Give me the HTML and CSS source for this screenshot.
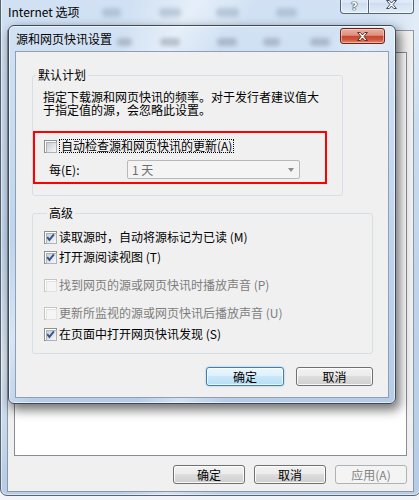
FILE: index.html
```html
<!DOCTYPE html>
<html lang="zh-CN">
<head>
<meta charset="utf-8">
<title>源和网页快讯设置</title>
<link rel="stylesheet" href="styles.css">
</head>
<body>
<div class="bgwin glass">
  <div class="bg-title">
    <span class="win-title">Internet 选项</span>
    <i class="haze" style="left:95px;top:15px;width:19px"></i>
    <i class="haze" style="left:152px;top:15px;width:22px"></i>
    <i class="haze" style="left:209px;top:15px;width:23px"></i>
    <i class="haze" style="left:269px;top:15px;width:21px"></i>
  </div>
  <div class="caps">
    <div class="cap cap-help"><span>?</span></div>
    <div class="cap cap-close">
      <svg width="11" height="9" viewBox="0 0 12 10"><path d="M0.5 0.5H3.5L6 3.3L8.5 0.5H11.5L7.7 5L11.5 9.5H8.5L6 6.7L3.5 9.5H0.5L4.3 5Z" fill="#fff" stroke="#2e3b4c" stroke-width="1"/></svg>
    </div>
  </div>
  <div class="bg-client">
    <div class="bg-tabs"></div>
    <div class="bg-panel"></div>
    <div class="bg-buttons">
      <button class="btn bg-btn" type="button">确定</button>
      <button class="btn bg-btn" type="button">取消</button>
      <button class="btn bg-btn" type="button" disabled>应用(A)</button>
    </div>
  </div>
</div>

<div class="dlg glass">
  <div class="dlg-title">
    <span class="win-title">源和网页快讯设置</span>
    <i class="haze dark" style="left:102px;top:12px;width:15px"></i>
    <i class="haze dark" style="left:145px;top:12px;width:20px"></i>
    <i class="haze dark" style="left:202px;top:12px;width:20px"></i>
    <i class="haze dark" style="left:248px;top:12px;width:17px"></i>
    <i class="haze dark" style="left:295px;top:12px;width:20px"></i>
    <div class="dlg-close">
      <svg width="11" height="9" viewBox="0 0 12 10"><path d="M0.5 0.5H3.5L6 3.3L8.5 0.5H11.5L7.7 5L11.5 9.5H8.5L6 6.7L3.5 9.5H0.5L4.3 5Z" fill="#fff" stroke="#5a1a10" stroke-width="1"/></svg>
    </div>
  </div>
  <div class="dlg-client">
    <fieldset class="group g1">
      <legend>默认计划</legend>
      <p class="desc">指定下载源和网页快讯的频率。对于发行者建议值大<br>于指定值的源，会忽略此设置。</p>
      <div class="hilite">
        <div class="row row-tight"><span class="cb"></span><span class="focus">自动检查源和网页快讯的更新(A)</span></div>
        <div class="combo-row">
          <span class="combo-label">每(E):</span>
          <div class="combo"><span>1 天</span><i class="arrow"></i></div>
        </div>
      </div>
    </fieldset>

    <fieldset class="group g2">
      <legend>高级</legend>
      <div class="row r1"><span class="cb"><svg width="13" height="13" viewBox="0 0 13 13"><path d="M3.2 6.2L5.4 8.9L9.9 3.4" fill="none" stroke="#34558c" stroke-width="1.9"/></svg></span><span>读取源时，自动将源标记为已读 (M)</span></div>
      <div class="row r2"><span class="cb"><svg width="13" height="13" viewBox="0 0 13 13"><path d="M3.2 6.2L5.4 8.9L9.9 3.4" fill="none" stroke="#34558c" stroke-width="1.9"/></svg></span><span>打开源阅读视图 (T)</span></div>
      <div class="row r3 dis"><span class="cb"></span><span>找到网页的源或网页快讯时播放声音 (P)</span></div>
      <div class="row r4 dis"><span class="cb"></span><span>更新所监视的源或网页快讯后播放声音 (U)</span></div>
      <div class="row r5"><span class="cb"><svg width="13" height="13" viewBox="0 0 13 13"><path d="M3.2 6.2L5.4 8.9L9.9 3.4" fill="none" stroke="#34558c" stroke-width="1.9"/></svg></span><span>在页面中打开网页快讯发现 (S)</span></div>
    </fieldset>

    <div class="dlg-buttons">
      <button class="btn def ok" type="button">确定</button>
      <button class="btn cancel" type="button">取消</button>
    </div>
  </div>
</div>
</body>
</html>
```

FILE: styles.css
```css
* { box-sizing: border-box; }
html, body { margin: 0; padding: 0; }
body {
  position: relative;
  width: 419px;
  height: 500px;
  overflow: hidden;
  background: #f2f4f7;
  font-family: "Noto Sans CJK SC", "Noto Sans", sans-serif;
  font-size: 12px;
  color: #000;
}

.glass {
  background:
    linear-gradient(118deg, rgba(255,255,255,0) 20%, rgba(255,255,255,.45) 29%, rgba(255,255,255,0) 38%, rgba(255,255,255,0) 56%, rgba(255,255,255,.4) 63%, rgba(255,255,255,0) 71%),
    linear-gradient(180deg, #d2e2f4 0%, #c0d5ec 55%, #b7cde7 100%);
}

.win-title { font-size: 12px; line-height: 15px; color: #000; white-space: nowrap; position: relative; z-index: 1; }

.haze {
  position: absolute;
  height: 9px;
  border-radius: 4px;
  background: rgba(120, 140, 165, .35);
  filter: blur(2px);
}
.haze.dark { height: 8px; background: rgba(100, 110, 125, .35); }

/* background window */
.bgwin {
  position: absolute;
  left: 0;
  top: -8px;
  width: 421px;
  height: 504px;
  border: 1px solid #59636f;
  border-radius: 7px;
  padding: 0 6px 3px 6px;
  display: flex;
  flex-direction: column;
  box-shadow: inset 0 0 0 1px rgba(255,255,255,.5);
}
.bg-title {
  position: relative;
  height: 37px;
  padding: 10px 0 0 1px;
  flex: none;
}
.caps {
  position: absolute;
  top: 0;
  right: 6px;
  display: flex;
}
.cap {
  height: 21px;
  border: 1px solid rgba(40, 55, 75, .75);
  border-top: none;
  background: linear-gradient(rgba(255,255,255,.55), rgba(225,235,246,.4) 50%, rgba(195,213,236,.4) 50%, rgba(232,241,250,.65));
  box-shadow: inset 0 0 0 1px rgba(255,255,255,.6);
  display: flex;
  align-items: flex-start;
  justify-content: center;
  padding-top: 8px;
}
.cap-help {
  width: 28px;
  border-right: none;
  border-radius: 0 0 0 4px;
}
.cap-help span {
  font-family: "DejaVu Sans", sans-serif;
  font-weight: bold;
  font-size: 11px;
  line-height: 11px;
  color: #fff;
  text-shadow: 0 0 1px #1f2a38, 0 0 1px #1f2a38, 0 0 1px #1f2a38;
}
.cap-close {
  width: 46px;
  border-radius: 0 0 4px 0;
  padding-top: 7px;
}
.bg-client {
  flex: 1;
  background: #f0f0f0;
  border: 1px solid #8c97a5;
  display: flex;
  flex-direction: column;
}
.bg-tabs { height: 21px; flex: none; }
.bg-panel {
  flex: 1;
  margin: 0 6px;
  background: #fff;
  border: 1px solid #898c95;
}
.bg-buttons {
  display: flex;
  justify-content: flex-end;
  gap: 9px;
  padding: 0 6px;
  margin: 9px 0 7px;
}
.bg-btn { width: 72px; }

/* buttons */
.btn {
  font: inherit;
  font-size: 12px;
  height: 19px;
  line-height: 17px;
  padding: 0;
  color: #000;
  border: 1px solid #707070;
  border-radius: 3px;
  background: linear-gradient(#f2f2f2 0%, #ebebeb 50%, #dddddd 50%, #cfcfcf 100%);
  box-shadow: inset 0 0 0 1px rgba(255,255,255,.85);
}
.btn.def {
  border-color: #3c7fb1;
  background: linear-gradient(#eaf6fd 0%, #dcf0fc 50%, #c8e7fa 50%, #b8def5 100%);
  box-shadow: inset 0 0 0 1px rgba(255,255,255,.7), 0 0 2px rgba(80,160,230,.6);
}
.btn:disabled {
  border-color: #adb2b5;
  background: #f4f4f4;
  color: #838383;
  box-shadow: none;
}

/* front dialog */
.dlg {
  position: absolute;
  left: 8px;
  top: 25px;
  width: 388px;
  height: 379px;
  border: 1px solid #3c4a5b;
  border-radius: 6px;
  padding: 0 6px 5px 6px;
  display: flex;
  flex-direction: column;
  box-shadow: 3px 5px 11px 1px rgba(0,0,0,.55), inset 0 0 0 1px rgba(255,255,255,.6);
}
.dlg-title {
  position: relative;
  height: 25px;
  flex: none;
  display: flex;
  align-items: center;
  padding-left: 1px;
}
.dlg-close {
  position: absolute;
  top: 2px;
  right: 4px;
  width: 45px;
  height: 16px;
  border: 1px solid #6e2419;
  border-radius: 3px;
  background: linear-gradient(#eab0a2 0%, #de8f7e 45%, #c8452f 52%, #cf563d 75%, #e2876b 100%);
  box-shadow: inset 0 0 0 1px rgba(255,220,210,.55);
  display: flex;
  align-items: center;
  justify-content: center;
}
.dlg-client {
  flex: 1;
  background: #f0f0f0;
  border: 1px solid #8e9fb5;
  padding: 16px 15px 0 16px;
  display: flex;
  flex-direction: column;
  align-items: flex-start;
}

.group {
  margin: 0;
  padding: 0;
  border: 1px solid #d5dfe5;
  border-radius: 3px;
  min-width: 0;
}
.group legend {
  margin-left: 3px;
  padding: 0 2px;
  line-height: 14px;
  font-size: 12px;
}
.g1 { width: 311px; padding: 0 0 11px 0; }
.g2 { width: 341px; margin-top: 10px; padding: 0 0 11px 11px; }

.desc {
  margin: 8px 0 0 10px;
  line-height: 13px;
  white-space: nowrap;
}

.hilite {
  margin-top: 15px;
  width: 294px;
  border: 2px solid #ff0000;
  padding: 6px 0 3px 9px;
}

.row {
  display: flex;
  align-items: center;
  gap: 2px;
  height: 16px;
  line-height: 16px;
  white-space: nowrap;
}
.row-tight { height: 14px; }
.focus {
  border: 1px dotted #000;
  line-height: 12px;
  padding: 0 1px;
}
.r1 { margin-top: 9px; }
.r2 { margin-top: 4px; }
.r3 { margin-top: 12px; }
.r4 { margin-top: 12px; }
.r5 { margin-top: 5px; }
.row.dis { color: #7d7d7d; }

.cb {
  position: relative;
  flex: none;
  display: block;
  width: 13px;
  height: 13px;
  border: 1px solid #8e8f8f;
  background: #fff;
  padding: 1px;
}
.cb::before {
  content: "";
  display: block;
  width: 9px;
  height: 9px;
  border: 1px solid #aeb3b9;
  background: linear-gradient(135deg, #c9ced4 0%, #e6e8eb 60%, #f7f7f7 100%);
}
.cb svg { position: absolute; left: -1px; top: -1px; }
.row.dis .cb { border-color: #c5c5c5; }
.row.dis .cb::before { border-color: #e2e2e2; background: #f5f5f5; }

.combo-row {
  display: flex;
  align-items: center;
  margin-top: 7px;
  height: 19px;
}
.combo-label {
  width: 83px;
  padding-left: 5px;
  white-space: nowrap;
}
.combo {
  width: 173px;
  height: 19px;
  border: 1px solid #b8b8b8;
  border-radius: 2px;
  background: #f4f4f4;
  color: #6d6d6d;
  display: flex;
  align-items: center;
  padding: 0 5px 0 4px;
}
.arrow {
  margin-left: auto;
  width: 0;
  height: 0;
  border-left: 3.5px solid transparent;
  border-right: 3.5px solid transparent;
  border-top: 4px solid #8c8c8c;
}

.dlg-buttons {
  align-self: stretch;
  display: flex;
  justify-content: flex-end;
  gap: 12px;
  margin-top: 13px;
}
.ok { width: 78px; }
.cancel { width: 77px; }
```
